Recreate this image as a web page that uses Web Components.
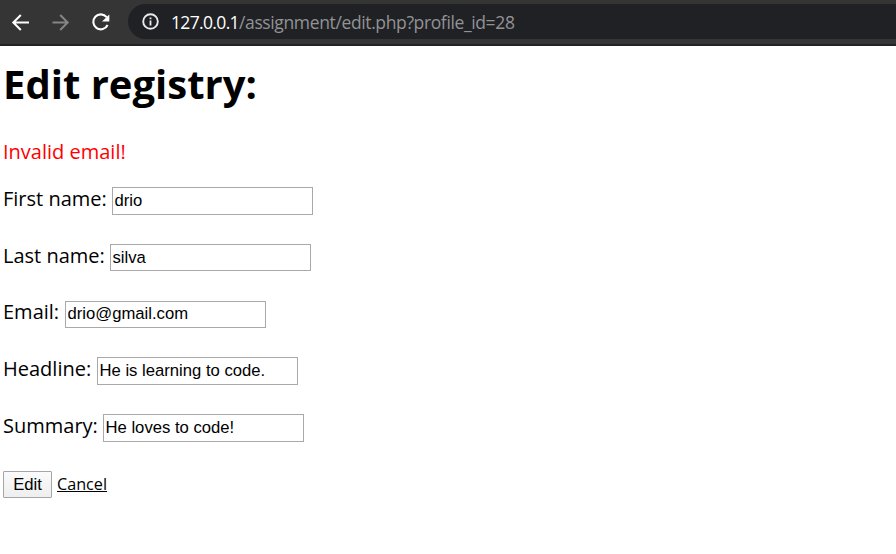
<!DOCTYPE html>
<html lang="en">
<head>
<meta charset="utf-8">
<title>Edit registry</title>
<style>
html, body { margin: 0; height: 100%; background: #fff; overflow: hidden; }
</style>
</head>
<body>
<browser-bar><span slot="host">127.0.0.1</span><span slot="path">/assignment/edit.php?profile_id=28</span></browser-bar>
<registry-page>
  <form-field style="--label:109px" value="drio">First name:</form-field>
  <form-field style="--label:107px" value="silva">Last name:</form-field>
  <form-field style="--label:62px" value="drio@gmail.com">Email:</form-field>
  <form-field style="--label:94px" value="He is learning to code.">Headline:</form-field>
  <form-field style="--label:100px" value="He loves to code!">Summary:</form-field>
  <form-actions></form-actions>
</registry-page>
<script>
const define = (name, html, setup) => customElements.define(name, class extends HTMLElement {
  constructor() {
    super();
    this.attachShadow({ mode: 'open' }).innerHTML = html;
  }
  connectedCallback() { if (setup) setup(this); }
});

define('browser-bar', `<style>
:host { display: flex; box-sizing: border-box; height: 46px; background: #353535; border-bottom: 2px solid #222226; padding: 4px 0 5px 8px; }
svg { display: block; }
.nav { display: flex; align-items: center; gap: 16px; width: 120px; flex: none; }
.nav svg { width: 24px; height: 24px; flex: none; }
.url { flex: 1; display: flex; align-items: center; background: #202124; border-radius: 18px 0 0 18px; padding-left: 14px; font: 17.5px "Open Sans", "Noto Sans", sans-serif; color: #919395; white-space: pre; }
.url svg { width: 17px; height: 17px; margin-right: 12px; flex: none; }
.host { color: #fff; letter-spacing: -.65px; }
.path { letter-spacing: -.37px; }
</style>
<div class="nav">
<svg viewBox="0 0 24 24" fill="none" stroke="#fff" stroke-width="2"><path d="M21 12.5H6M12.8 5L5.3 12.5L12.8 20"/></svg>
<svg viewBox="0 0 24 24" fill="none" stroke="#858585" stroke-width="2"><path d="M4.5 12.5H19.5M12.2 5L19.7 12.5L12.2 20"/></svg>
<svg viewBox="0 0 24 24"><path d="M18.7 7.2A7.5 7.5 0 1 0 19.6 15" fill="none" stroke="#fff" stroke-width="2.1"/><path d="M21.3 4.4V11.6H14Z" fill="#fff"/></svg>
</div>
<div class="url"><svg viewBox="0 0 17 17"><circle cx="8.5" cy="8.5" r="7.3" fill="none" stroke="#e8eaed" stroke-width="1.9"/><path d="M7.6 4.4h1.8v1.8H7.6zM7.6 7.5h1.8v5H7.6z" fill="#e8eaed"/></svg><span class="host"><slot name="host"></slot></span><span class="path"><slot name="path"></slot></span></div>`);

define('registry-page', `<style>
:host { display: block; padding: 10px 3px 0; color: #000; font: 400 20px/28px "Open Sans", sans-serif; }
h1 { margin: 0; font-size: 40px; font-weight: 700; line-height: 56px; }
p { margin: 26px 0 21px; color: #f00; }
.fields { display: flex; flex-direction: column; gap: 29.25px; }
</style>
<h1>Edit registry:</h1><p>Invalid email!</p><div class="fields"><slot></slot></div>`);

define('form-field', `<style>
:host { display: flex; height: 27.5px; }
label { width: var(--label); flex: none; white-space: nowrap; line-height: 24px; margin-top: -.1px; }
input { box-sizing: border-box; width: 201px; height: 27.5px; margin: 0; padding: 1px 1.5px; border: 1px solid #a9a9a9; border-radius: 0; background: #fff; color: #000; outline: 0; font: 16.67px "Liberation Sans", Arial, sans-serif; }
</style><label for="field"><slot></slot></label><input id="field">`, el => {
  el.shadowRoot.querySelector('input').value = el.getAttribute('value');
});

define('form-actions', `<style>
:host { display: flex; height: 27px; gap: 5px; align-items: center; }
button { box-sizing: border-box; width: 49px; height: 27px; margin: 0; padding: 1px 0 0; border: 1px solid #a6a6a6; border-radius: 1px; background: linear-gradient(#fbfbfb, #eee); color: #000; font: 16.67px "Liberation Sans", Arial, sans-serif; }
a { color: #000; font-size: 16.2px; text-decoration: underline; }
</style><button type="button">Edit</button><a href="#">Cancel</a>`);
</script>
</body>
</html>
